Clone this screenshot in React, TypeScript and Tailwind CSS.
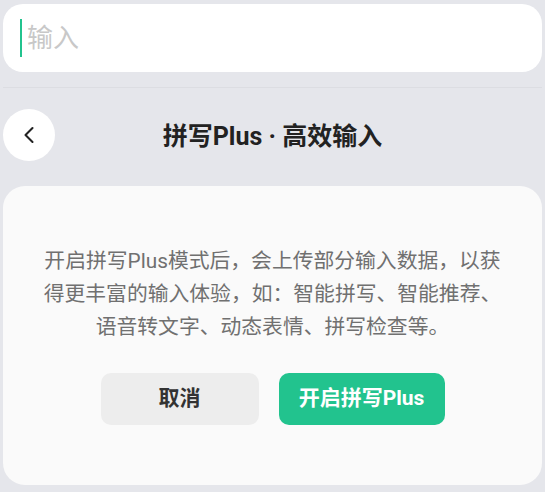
import { ChevronLeft } from "lucide-react";

const font = {
	fontFamily: 'Roboto, "Noto Sans CJK SC", sans-serif',
};

const lines = [
	"开启拼写Plus模式后，会上传部分输入数据，以获",
	"得更丰富的输入体验，如：智能拼写、智能推荐、",
	"语音转文字、动态表情、拼写检查等。",
];

export default function App() {
	return (
		<div
			className="flex h-[492px] w-full flex-col overflow-hidden bg-[#e5e6eb] px-[3px] pt-[4px]"
			style={font}
		>
			{/* search input */}
			<div className="flex h-[68px] items-center rounded-[20px] bg-white pl-[17px]">
				<span className="h-[38px] w-[2px] bg-[#22c38e]" />
				<span className="ml-[5px] text-[26px] leading-none text-[#c8c8c8]">
					输入
				</span>
			</div>

			<div className="mt-[15px] h-px bg-[#dcdde2]" />

			{/* header */}
			<div className="relative flex h-[98px] items-center justify-center">
				<button className="absolute left-0 top-[21px] flex h-[52px] w-[52px] items-center justify-center rounded-full bg-white text-[#222]">
					<ChevronLeft size={28} strokeWidth={1.8} />
				</button>
				<h1 className="text-[25px] font-bold text-[#222]">
					拼写Plus · 高效输入
				</h1>
			</div>

			{/* dialog card */}
			<div className="flex h-[299px] flex-col items-center rounded-[22px] bg-[#fafafa] px-[20px] pt-[59px]">
				<div className="text-center text-[20.8px] leading-[33px] text-[#707070]">
					{lines.map((l) => (
						<p key={l} className="whitespace-nowrap">
							{l}
						</p>
					))}
				</div>
				<div className="mt-[29px] flex gap-[20px]">
					<button className="h-[52px] w-[158px] rounded-[10px] bg-[#ededed] text-[21px] font-bold text-[#333]">
						取消
					</button>
					<button className="h-[52px] w-[166px] rounded-[10px] bg-[#22c38e] text-[21px] font-bold text-white">
						开启拼写Plus
					</button>
				</div>
			</div>
		</div>
	);
}
